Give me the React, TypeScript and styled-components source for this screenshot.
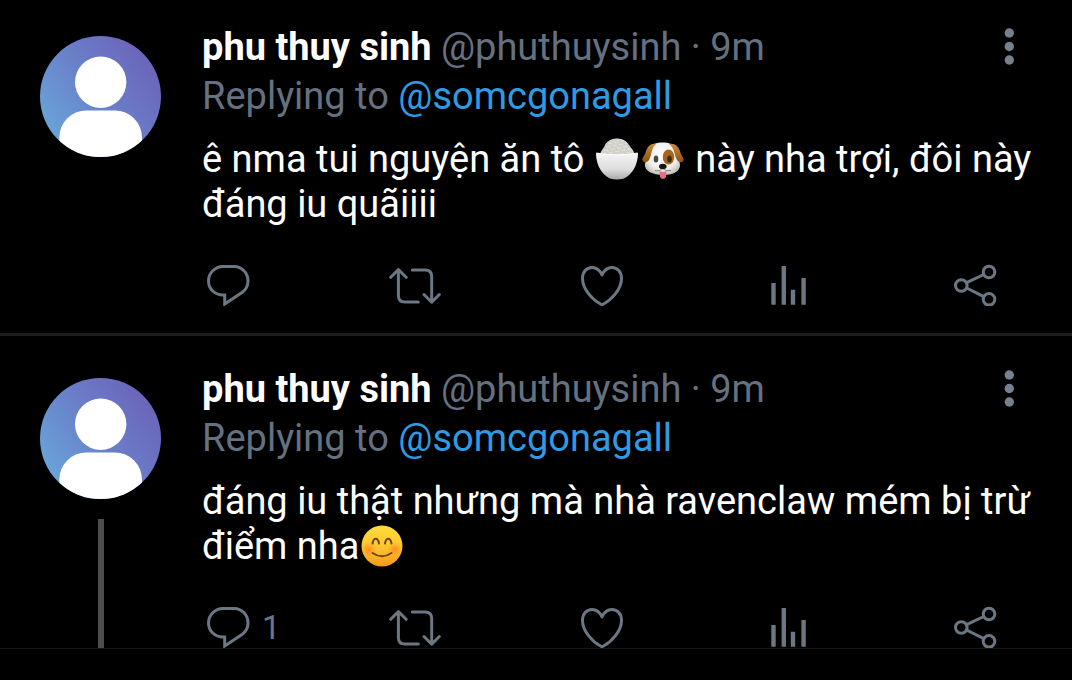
import React from "react";
import styled, { createGlobalStyle } from "styled-components";

const GlobalStyle = createGlobalStyle`
  * { box-sizing: border-box; }
  body { margin: 0; background: #000; color: #fff; font-family: Roboto, "Noto Sans", sans-serif; }
  button { border: 0; padding: 0; background: none; color: inherit; font: inherit; cursor: pointer; }
`;

const Timeline = styled.main`
  border-bottom: 1px solid #141414;
`;

const Tweet = styled.article`
  display: flex;
  gap: 41px;
  padding: 42px 32px 27px 40px;
  border-bottom: 3px solid #1d1d1d;
  &:first-child { padding-top: 36px; }
  &:last-child { padding-bottom: 0; border-bottom: 0; }
`;

const AvatarColumn = styled.div`
  flex: none;
  width: 121px;
  display: flex;
  flex-direction: column;
  align-items: center;
  gap: 20px;
`;

const AvatarPicture = styled.svg`
  display: block;
  flex: none;
  width: 121px;
  height: 121px;
`;

const ThreadLine = styled.div`
  flex: 1;
  width: 6px;
  background: #4e4e4e;
`;

const Content = styled.div`
  flex: 1;
  min-width: 0;
  margin-top: -13px;
`;

const Header = styled.header`
  display: flex;
  justify-content: space-between;
  align-items: center;
  padding-right: 21px;
  font-size: 38px;
  line-height: 49px;
  color: #657180;
  white-space: nowrap;
`;

const Name = styled.strong`
  font-weight: 700;
  color: #fff;
`;

const MenuButton = styled.button`
  display: flex;
  svg { width: 20px; height: 40px; fill: #76818e; }
`;

const Reply = styled.p`
  margin: 0;
  font-size: 38px;
  line-height: 49px;
  color: #657180;
`;

const Mention = styled.a`
  color: #2f9be3;
  text-decoration: none;
`;

const Body = styled.p`
  margin: 16px 0 37px;
  font-size: 38px;
  line-height: 45px;
`;

const Emoji = styled.svg`
  width: 42px;
  height: 42px;
  margin: 0 2px;
  vertical-align: -8px;
`;

const Actions = styled.footer`
  display: flex;
  justify-content: space-between;
  padding-right: 39px;
`;

const ActionButton = styled.button`
  display: flex;
  align-items: center;
  gap: 8px;
  width: 52px;
  height: 42px;
  color: #6c7784;
  font-size: 33px;
  svg {
    flex: none;
    width: 52px;
    height: 42px;
    fill: none;
    stroke: currentColor;
    stroke-width: 3;
    stroke-linecap: round;
    stroke-linejoin: round;
  }
`;

function Avatar({ id }: { id: string }) {
  return (
    <AvatarPicture viewBox="0 0 121 121" role="img" aria-label="phu thuy sinh">
      <defs>
        <linearGradient id={`bg-${id}`} x1="0" y1="0.75" x2="0.9" y2="0.1">
          <stop offset="0" stopColor="#68a6da" />
          <stop offset="0.5" stopColor="#6a7fc9" />
          <stop offset="1" stopColor="#6c62b8" />
        </linearGradient>
        <clipPath id={`clip-${id}`}>
          <circle cx="60.5" cy="60.5" r="60.5" />
        </clipPath>
      </defs>
      <g clipPath={`url(#clip-${id})`}>
        <rect width="121" height="121" fill={`url(#bg-${id})`} />
        <circle cx="60.7" cy="46.2" r="25.7" fill="#fff" />
        <rect x="19.3" y="74.5" width="82.7" height="70" rx="27" fill="#fff" />
      </g>
    </AvatarPicture>
  );
}

function Rice() {
  return (
    <Emoji viewBox="0 0 42 42" role="img" aria-label="rice">
      <defs>
        <linearGradient id="bowl" x1="0" y1="0" x2="0" y2="1">
          <stop offset="0" stopColor="#f4f4f4" />
          <stop offset="0.6" stopColor="#dedede" />
          <stop offset="1" stopColor="#aaa" />
        </linearGradient>
        <pattern id="grains" width="5" height="4" patternUnits="userSpaceOnUse" patternTransform="rotate(28)">
          <rect width="5" height="4" fill="#d3d0c8" />
          <path d="M0 1l2 1M3 3l2-1" stroke="#e9e7e0" strokeWidth="1" />
          <path d="M3 0l1 1" stroke="#bfbbb1" strokeWidth="0.7" />
        </pattern>
      </defs>
      <path d="M4 17C5 12 8 10 9 7C12 2 16 1 20 .5C26 0 31 3 33 7C35 10 38 12 38.500 17Z" fill="url(#grains)" />
      <path d="M0 15Q21 18 42 15C42 25 38 33 32 38Q28 41.500 21 41.500Q14 41.500 10 38C4 33 0 25 0 15Z" fill="url(#bowl)" />
      <path d="M.5 15Q21 19 41.500 15" fill="none" stroke="#fff" strokeWidth="1" />
    </Emoji>
  );
}

function Dog() {
  return (
    <Emoji viewBox="0 0 42 42" role="img" aria-label="dog face">
      <defs>
        <radialGradient id="dogFace" cx="0.5" cy="0.4" r="0.6">
          <stop offset="0" stopColor="#fff" />
          <stop offset="0.7" stopColor="#f0efed" />
          <stop offset="1" stopColor="#c4c1bc" />
        </radialGradient>
        <linearGradient id="dogEar" x1="0" y1="0" x2="0" y2="1">
          <stop offset="0" stopColor="#c98b3f" />
          <stop offset="1" stopColor="#8c5012" />
        </linearGradient>
      </defs>
      <path d="M12 6C22 3 30 5 34 10C37 15 37 21 38 27C38 34 30 37 21 37C11 37 2 33 3 26C5 19 4 10 12 6Z" fill="url(#dogFace)" />
      <path d="M14 6C9 5 6 8 4 13C3 18 0 19 .5 22C1 25 5 25 7 22C10 17 9 10 14 6Z" fill="url(#dogEar)" />
      <path d="M27 6C33 5 36 8 38 13C39 18 42 19 41.500 22C41 25 37 25 35 22C32 17 33 10 27 6Z" fill="url(#dogEar)" />
      <ellipse cx="26.500" cy="19" rx="5.800" ry="7.500" fill="#a8651c" />
      <ellipse cx="14" cy="21" rx="2.300" ry="3.500" fill="#4a4644" />
      <ellipse cx="27.500" cy="21" rx="2.300" ry="3.500" fill="#402810" />
      <path d="M17.500 33Q21 35 24.500 33L24 39Q21 43 18 39Z" fill="#e66f85" />
      <path d="M13 32.500Q18 34 20.500 30Q24 34 29 32.500" fill="none" stroke="#88827c" strokeWidth="1" />
      <ellipse cx="20.800" cy="28.500" rx="3.800" ry="2.700" fill="#171717" />
    </Emoji>
  );
}

function Smile() {
  return (
    <Emoji viewBox="0 0 42 42" role="img" aria-label="smiling face">
      <defs>
        <linearGradient id="smileFace" x1="0" y1="0" x2="0" y2="1">
          <stop offset="0" stopColor="#ffdc3c" />
          <stop offset="0.55" stopColor="#fec42c" />
          <stop offset="1" stopColor="#f49a1b" />
        </linearGradient>
        <radialGradient id="blush">
          <stop offset="0" stopColor="#ff6a20" stopOpacity="0.6" />
          <stop offset="1" stopColor="#ff7a24" stopOpacity="0" />
        </radialGradient>
      </defs>
      <circle cx="21" cy="21" r="20.500" fill="url(#smileFace)" />
      <circle cx="8" cy="24.500" r="7.500" fill="url(#blush)" />
      <circle cx="34" cy="24.500" r="7.500" fill="url(#blush)" />
      <path d="M11.500 18.500C12.500 12 17 12 18 18.500M24 18.500C25 12 29.500 12 30.500 18.500M11.500 28Q21 34.500 30.500 28" fill="none" stroke="#704514" strokeWidth="2" strokeLinecap="round" />
    </Emoji>
  );
}

function Post({ id, replies, thread, children }: {
  id: string;
  replies?: number;
  thread?: boolean;
  children: React.ReactNode;
}) {
  return (
    <Tweet>
      <AvatarColumn>
        <Avatar id={id} />
        {thread && <ThreadLine />}
      </AvatarColumn>
      <Content>
        <Header>
          <span><Name>phu thuy sinh</Name> @phuthuysinh · 9m</span>
          <MenuButton type="button" aria-label="More options">
            <svg viewBox="0 0 20 40">
              <circle cx="10.300" cy="5" r="4.700" />
              <circle cx="10.300" cy="18.500" r="4.700" />
              <circle cx="10.300" cy="32" r="4.700" />
            </svg>
          </MenuButton>
        </Header>
        <Reply>Replying to <Mention href="#somcgonagall">@somcgonagall</Mention></Reply>
        <Body>{children}</Body>
        <Actions>
          <ActionButton type="button" aria-label="Reply">
            <svg viewBox="0 0 52 42">
              <path strokeLinejoin="miter" d="M21 2.500H32C40 2.500 46 9 46 17C46 22 43.500 26 40 28.500L22.700 40V31H21C13 31 6.500 25 6.500 17C6.500 9 13 2.500 21 2.500Z" />
            </svg>
            {replies && <span>{replies}</span>}
          </ActionButton>
          <ActionButton type="button" aria-label="Retweet">
            <svg viewBox="0 0 52 42">
              <path d="M1.700 13.300L9.400 5.600L17.200 13.300M9.400 6V31.500Q9.400 38 16 38H29.300M23.300 6H36Q42.700 6 42.700 12.500V38M35 30.500L42.700 38.200L50.300 30.500" />
            </svg>
          </ActionButton>
          <ActionButton type="button" aria-label="Like">
            <svg viewBox="0 0 52 42">
              <path d="M26 11C24 6.500 20.500 3.500 16 3.500C10.500 3.500 6.500 8 6.500 14.500C6.500 25.500 17 36 24.500 40Q26 41 27.500 40C35 36 45.500 25.500 45.500 14.500C45.500 8 41.500 3.500 36 3.500C31.500 3.500 28 6.500 26 11Z" />
            </svg>
          </ActionButton>
          <ActionButton type="button" aria-label="View statistics">
            <svg viewBox="0 0 52 42">
              <path strokeLinecap="butt" strokeWidth="4.400" d="M11.500 19V40.700M21.800 2V40.700M31 25.700V40.700M41.600 14V40.700" />
            </svg>
          </ActionButton>
          <ActionButton type="button" aria-label="Share">
            <svg viewBox="0 0 52 42">
              <path d="M17.600 18.700L34.800 10.500M17.600 24L34.800 32.700" />
              <circle cx="12.300" cy="21.500" r="5.800" />
              <circle cx="40" cy="8" r="5.800" />
              <circle cx="40" cy="35.300" r="5.800" />
            </svg>
          </ActionButton>
        </Actions>
      </Content>
    </Tweet>
  );
}

export default function App() {
  return (
    <>
      <GlobalStyle />
      <Timeline>
        <Post id="first">
          ê nma tui nguyện ăn tô <Rice /><Dog /> này nha trợi, đôi này đáng iu quãiiii
        </Post>
        <Post id="second" replies={1} thread>
          đáng iu thật nhưng mà nhà ravenclaw mém bị trừ điểm nha<Smile />
        </Post>
      </Timeline>
    </>
  );
}
